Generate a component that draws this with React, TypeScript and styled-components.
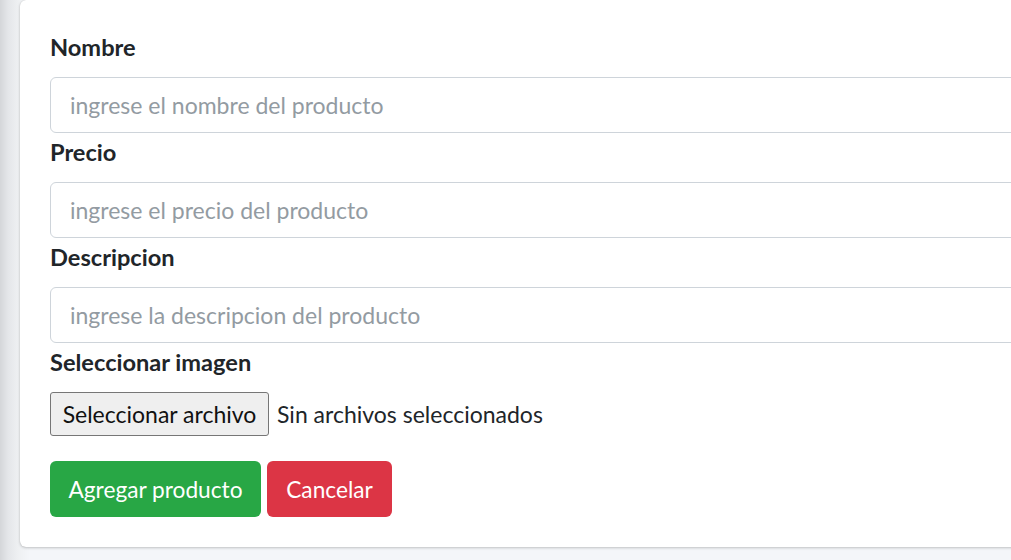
import React from "react";
import styled, { createGlobalStyle } from "styled-components";

const Global = createGlobalStyle`
  html, body { margin: 0; padding: 0; }
  body { font-family: Lato, "Liberation Sans", sans-serif; }
  * { box-sizing: border-box; }
`;

const Page = styled.div`
  width: 1011px;
  height: 560px;
  overflow: hidden;
  background: linear-gradient(to right, #d4d6d9 0px, #e4e6e9 8px, #eef0f2 18px, #f4f6f9 30px);
`;

const Card = styled.div`
  margin-left: 20px;
  width: 1100px;
  background: #ffffff;
  border-radius: 6px;
  box-shadow: 0 0 1px rgba(0, 0, 0, 0.18), 0 1px 3px rgba(0, 0, 0, 0.2);
  padding: 32px 0 30px 30px;
`;

const Form = styled.form`
  display: flex;
  flex-direction: column;
`;

const Label = styled.label`
  display: block;
  font-size: 23.6px;
  line-height: 31px;
  font-weight: 700;
  color: #212529;
  margin-bottom: 14px;
`;

const Field = styled.div<{ $gapTop?: number }>`
  margin-top: ${(p) => p.$gapTop ?? 0}px;
`;

const Input = styled.input`
  display: block;
  width: 1100px;
  height: 56px;
  padding: 0 19px;
  font-family: inherit;
  font-size: 23px;
  color: #495057;
  background: #fff;
  border: 1px solid #ced4da;
  border-radius: 6px;
  outline: none;
  &::placeholder {
    color: #939ba2;
  }
`;

const FileRow = styled.div`
  display: flex;
  align-items: center;
  gap: 8px;
  height: 44px;
`;

const FileButton = styled.button`
  height: 44px;
  width: 219px;
  background: #efefef;
  border: 1px solid #767676;
  border-radius: 3px;
  font-family: inherit;
  font-size: 23px;
  color: #111;
  padding: 0;
`;

const FileText = styled.span`
  font-size: 23px;
  color: #212529;
`;

const Actions = styled.div`
  display: flex;
  gap: 6px;
  margin-top: 25px;
`;

const Button = styled.button<{ $variant: "success" | "danger"; $w: number }>`
  height: 56px;
  width: ${(p) => p.$w}px;
  border: none;
  border-radius: 6px;
  font-family: inherit;
  font-size: 22.7px;
  color: #fff;
  background: ${(p) => (p.$variant === "success" ? "#28a745" : "#dc3545")};
  padding: 0;
`;

export default function App() {
  return (
    <>
      <Global />
      <Page>
        <Card>
          <Form onSubmit={(e) => e.preventDefault()}>
            <Field>
              <Label>Nombre</Label>
              <Input placeholder="ingrese el nombre del producto" />
            </Field>
            <Field $gapTop={4}>
              <Label>Precio</Label>
              <Input placeholder="ingrese el precio del producto" />
            </Field>
            <Field $gapTop={4}>
              <Label>Descripcion</Label>
              <Input placeholder="ingrese la descripcion del producto" />
            </Field>
            <Field $gapTop={4}>
              <Label>Seleccionar imagen</Label>
              <FileRow>
                <FileButton type="button">Seleccionar archivo</FileButton>
                <FileText>Sin archivos seleccionados</FileText>
              </FileRow>
            </Field>
            <Actions>
              <Button type="submit" $variant="success" $w={211}>
                Agregar producto
              </Button>
              <Button type="button" $variant="danger" $w={125}>
                Cancelar
              </Button>
            </Actions>
          </Form>
        </Card>
      </Page>
    </>
  );
}
